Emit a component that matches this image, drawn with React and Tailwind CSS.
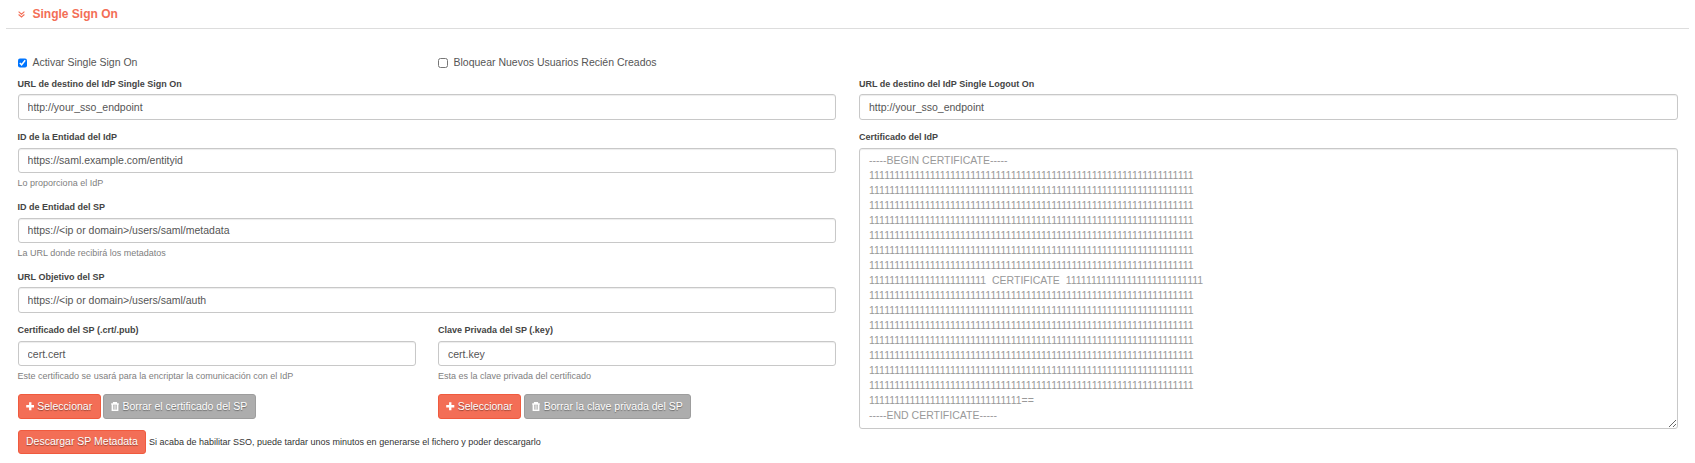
const ones = (n) => "1".repeat(n);

const CERTIFICATE = [
  "-----BEGIN CERTIFICATE-----",
  ...Array(7).fill(ones(64)),
  `${ones(23)}  CERTIFICATE  ${ones(27)}`,
  ...Array(7).fill(ones(64)),
  `${ones(30)}==`,
  "-----END CERTIFICATE-----",
].join("\n");

function Field({ label, value, help, className = "", labelClass = "", inputClass = "h-[25px]" }) {
  return (
    <div className={`flex flex-col ${className}`}>
      <label className={`h-[17px] text-[9px] leading-[13px] font-bold text-[#444] ${labelClass}`}>{label}</label>
      <input
        type="text"
        defaultValue={value}
        className={`w-full rounded-[3px] border border-[#c8c8c8] bg-white px-[9px] text-[10.5px] text-[#555] shadow-[inset_0_1px_1px_rgba(0,0,0,0.075)] outline-none ${inputClass}`}
      />
      {help && <p className="mt-1 h-[13px] text-[9px] leading-[13px] text-[#808080]">{help}</p>}
    </div>
  );
}

function Check({ label, checked, boxClass }) {
  return (
    <label className="flex h-[15px] items-center text-[10.5px] leading-[15px] text-[#555]">
      <input type="checkbox" defaultChecked={checked} className={`mt-px ${boxClass}`} />
      {label}
    </label>
  );
}

function Button({ children, gray, className = "" }) {
  return (
    <button
      className={`flex items-center rounded-[3px] border pl-[7.4px] text-[10.5px] whitespace-nowrap text-white [text-shadow:0_1px_1px_rgba(0,0,0,0.4)] ${
        gray ? "border-[#9d9d9d] bg-[#adadad]" : "border-[#f05a3e] bg-[#f36e56]"
      } ${className}`}
    >
      {children}
    </button>
  );
}

function Plus() {
  return (
    <svg viewBox="0 0 8 8" className="mr-[2.8px] size-[8.5px] shrink-0" fill="currentColor">
      <path d="M2.9 0.2h2.2v2.7h2.7v2.2H5.1v2.7H2.9V5.1H0.2V2.9h2.7z" />
    </svg>
  );
}

function Trash() {
  return (
    <svg viewBox="0 0 8 9" className="mr-[3.4px] h-[9px] w-2 shrink-0" fill="none" stroke="currentColor">
      <path d="M0.2 2h7.6M2.6 1.8V0.6h2.8v1.2M1.3 2v6.3h5.4V2" strokeWidth="1.4" />
      <path d="M3 3.2v4.3M4 3.2v4.3M5 3.2v4.3" strokeWidth="0.6" />
    </svg>
  );
}

function DoubleChevron() {
  return (
    <svg viewBox="0 0 7 7" className="mr-[8px] size-[7px]" fill="none" stroke="currentColor" strokeWidth="1.1">
      <path d="M0.6 0.7l2.9 2.5 2.9-2.5M0.6 3.5l2.9 2.5 2.9-2.5" />
    </svg>
  );
}

export default function App() {
  return (
    <main className="h-[463px] w-[1695px] overflow-hidden bg-white px-1.5 font-['Liberation_Sans',Arial,sans-serif]">
      <h2 className="flex h-[29px] items-center border-b border-[#ddd] pl-[11.5px] text-[12px] font-bold text-[#f36e56]">
        <DoubleChevron />
        Single Sign On
      </h2>
      <div className="grid grid-cols-[818.4px_819px] gap-x-[23px] pt-[26px] pl-[11.6px]">
        <div className="grid grid-cols-[398.4px_398px] gap-x-[22px]">
          <Check label="Activar Single Sign On" checked boxClass="size-[9.5px] mr-[5.3px]" />
          <Check label="Bloquear Nuevos Usuarios Recién Creados" boxClass="size-[10px] mr-[5.5px]" />
        </div>
      </div>
      <div className="grid grid-cols-[818.4px_819px] gap-x-[23px] pt-[7px] pl-[11.6px]">
        <section className="flex flex-col">
          <Field label="URL de destino del IdP Single Sign On" value="http://your_sso_endpoint" labelClass="pt-px" inputClass="h-[26px]" />
          <Field className="mt-[11px]" label="ID de la Entidad del IdP" value="https://saml.example.com/entityid" help="Lo proporciona el IdP" inputClass="h-[25px] pb-px" />
          <Field className="mt-[11px]" label="ID de Entidad del SP" value="https://<ip or domain>/users/saml/metadata" help="La URL donde recibirá los metadatos" inputClass="h-[25px] pb-px" />
          <Field className="mt-[10px]" label="URL Objetivo del SP" value="https://<ip or domain>/users/saml/auth" labelClass="pt-px" inputClass="h-[26px]" />
          <div className="mt-[11px] grid grid-cols-[398.4px_398px] gap-x-[22px]">
            <Field label="Certificado del SP (.crt/.pub)" value="cert.cert" help="Este certificado se usará para la encriptar la comunicación con el IdP" />
            <Field label="Clave Privada del SP (.key)" value="cert.key" help="Esta es la clave privada del certificado" />
            <div className="mt-[11px] flex gap-[2px]">
              <Button className="h-[25px] w-[83px]"><Plus />Seleccionar</Button>
              <Button gray className="h-[25px] w-[153px]"><Trash />Borrar el certificado del SP</Button>
            </div>
            <div className="mt-[11px] flex gap-[3px]">
              <Button className="h-[25px] w-[83px]"><Plus />Seleccionar</Button>
              <Button gray className="h-[25px] w-[167px]"><Trash />Borrar la clave privada del SP</Button>
            </div>
          </div>
          <div className="mt-[11px] flex items-center gap-[3.4px]">
            <Button className="h-6 w-32">Descargar SP Metadata</Button>
            <span className="pt-px text-[9px] text-[#333]">
              Si acaba de habilitar SSO, puede tardar unos minutos en generarse el fichero y poder descargarlo
            </span>
          </div>
        </section>
        <section className="flex flex-col">
          <Field label="URL de destino del IdP Single Logout On" value="http://your_sso_endpoint" labelClass="pt-px" inputClass="h-[26px]" />
          <label className="mt-[11px] h-[17px] text-[9px] leading-[13px] font-bold text-[#444]">Certificado del IdP</label>
          <textarea
            placeholder={CERTIFICATE}
            className="h-[281px] w-full resize overflow-hidden rounded-[3px] border border-[#c8c8c8] bg-white px-[9px] py-1 text-[10.5px] leading-[15px] shadow-[inset_0_1px_1px_rgba(0,0,0,0.075)] outline-none placeholder:text-[#999]"
          />
        </section>
      </div>
    </main>
  );
}
